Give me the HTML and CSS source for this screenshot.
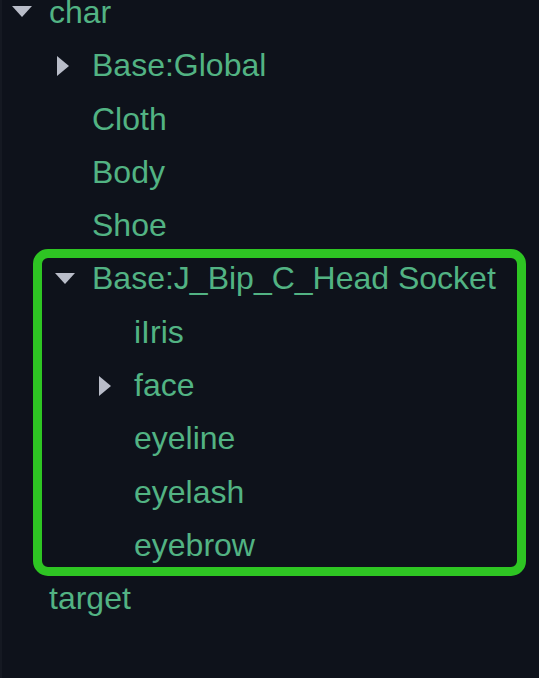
FILE: index.html
```html
<!DOCTYPE html>
<html>
<head>
<title>Scene tree</title>
<link rel="stylesheet" href="styles.css">
</head>
<body>

<div class="tree">
  <div class="row lvl0"><span class="arrow"><svg width="20" height="11" viewBox="0 0 20 11"><path d="M0 0 L20 0 L10 11 Z" /></svg></span><span class="label">char</span></div>
  <div class="row lvl1"><span class="arrow right"><svg width="12" height="20" viewBox="0 0 12 20"><path d="M0 0 L12 10 L0 20 Z" /></svg></span><span class="label">Base:Global</span></div>
  <div class="row lvl1"><span class="arrow"></span><span class="label">Cloth</span></div>
  <div class="row lvl1"><span class="arrow"></span><span class="label">Body</span></div>
  <div class="row lvl1"><span class="arrow"></span><span class="label">Shoe</span></div>

  <div class="group highlight">
    <div class="row lvl1"><span class="arrow"><svg width="20" height="11" viewBox="0 0 20 11"><path d="M0 0 L20 0 L10 11 Z" /></svg></span><span class="label">Base:J_Bip_C_Head Socket</span></div>
    <div class="row lvl2"><span class="arrow"></span><span class="label">iIris</span></div>
    <div class="row lvl2"><span class="arrow right"><svg width="12" height="20" viewBox="0 0 12 20"><path d="M0 0 L12 10 L0 20 Z" /></svg></span><span class="label">face</span></div>
    <div class="row lvl2"><span class="arrow"></span><span class="label">eyeline</span></div>
    <div class="row lvl2"><span class="arrow"></span><span class="label">eyelash</span></div>
    <div class="row lvl2"><span class="arrow"></span><span class="label">eyebrow</span></div>
  </div>

  <div class="row lvl0"><span class="arrow"></span><span class="label">target</span></div>
</div>

</body>
</html>
```

FILE: styles.css
```css
html, body {
  margin: 0;
  height: 100%;
  background-color: #0e121b;
  overflow: hidden;
}

body {
  border-left: 2px solid #151922;
  box-sizing: border-box;
}

.tree {
  margin-top: -14px;
  font-family: "Liberation Sans", Arial, sans-serif;
  font-size: 32px;
  color: #52b383;
}

.row {
  display: flex;
  align-items: center;
  height: 53.3px;
  line-height: 53.3px;
  white-space: nowrap;
}

.lvl0 { padding-left: 10px; }
.lvl1 { padding-left: 53px; }
.lvl2 { padding-left: 95px; }

.arrow {
  width: 37px;
  flex: none;
  display: flex;
  align-items: center;
  margin-top: -2px;
}

.arrow.right {
  padding-left: 2px;
  width: 35px;
  margin-top: 0;
}

.arrow svg {
  display: block;
  fill: #b9bdc9;
}

.group {
  position: relative;
}

/* green annotation box drawn over the rows */
.highlight::before {
  content: "";
  position: absolute;
  left: 31px;
  top: -3px;
  width: 493px;
  bottom: -4px;
  border: 9px solid #2ec523;
  border-radius: 15px;
  box-sizing: border-box;
  pointer-events: none;
}
```
